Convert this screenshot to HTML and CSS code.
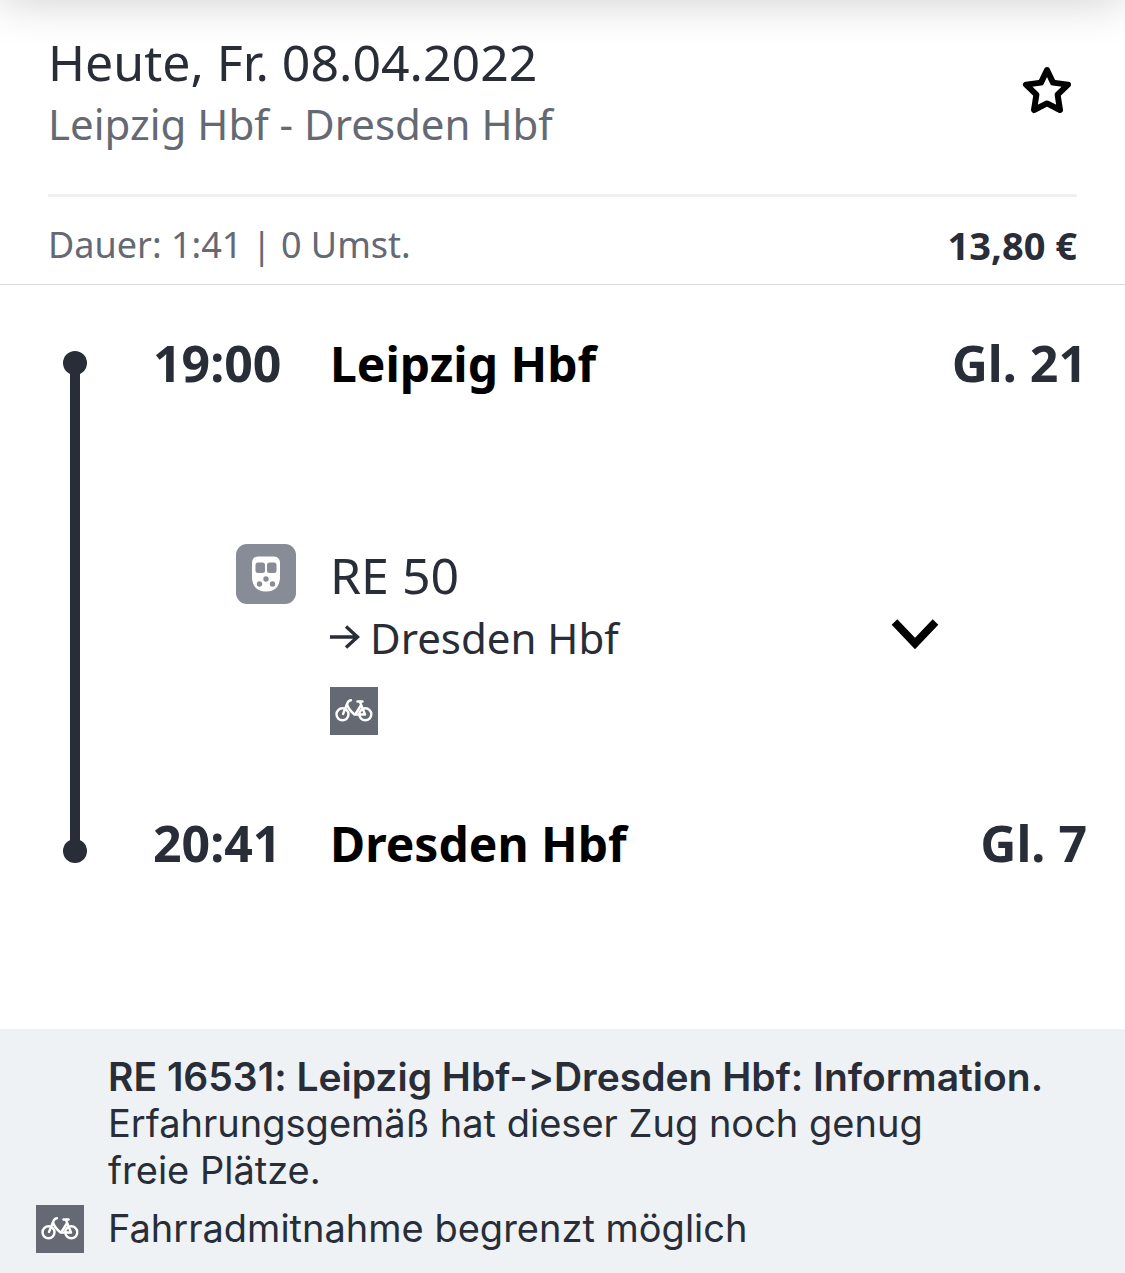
FILE: index.html
```html
<!DOCTYPE html>
<html lang="de">
  <head>
    <meta charset="UTF-8" />
    <meta name="viewport" content="width=device-width, initial-scale=1.0" />
    <title>Leipzig Hbf - Dresden Hbf</title>
    <link rel="stylesheet" href="styles.css">
  </head>

  <body>
    <!-- shared bike symbol, used in the leg and in the notes -->
    <svg class="symbols" width="0" height="0" aria-hidden="true">
      <symbol id="bike" viewBox="0 0 48 48">
        <g fill="none" stroke="#fff" stroke-width="2.4" stroke-linecap="round" stroke-linejoin="round">
          <circle cx="12.5" cy="27.3" r="6" />
          <circle cx="35.3" cy="27.3" r="6" />
          <path d="M13 27 L17.5 16 Q18.6 13.2 21 13.2" />
          <path d="M17 17.5 Q19 23 24.5 27.500 H35 L30 15" />
          <path d="M25.500 27 L30.500 19" />
          <path d="M27.500 14.500 H32.500" />
        </g>
      </symbol>
    </svg>

    <header class="header">
      <div class="headline">
        <div>
          <h1 class="date">Heute, Fr. 08.04.2022</h1>
          <p class="route">Leipzig Hbf - Dresden Hbf</p>
        </div>
        <button class="icon-btn" type="button" aria-label="Merken">
          <svg width="60" height="60" viewBox="0 0 60 60">
            <path d="M30 8 L36 20.600 L51 22.600 L40.600 32.600 L43 48 L30 41.400 L17 48 L19.400 32.600 L9 22.600 L24 20.600 Z" fill="none" stroke="#000" stroke-width="6" stroke-linejoin="round" />
          </svg>
        </button>
      </div>
      <div class="summary">
        <span>Dauer: 1:41 | 0 Umst.</span>
        <strong class="price">13,80 €</strong>
      </div>
    </header>

    <main class="journey">
      <div class="timeline">
        <span class="dot"></span>
        <span class="line"></span>
        <span class="dot"></span>
      </div>

      <div class="stops">
        <div class="stop">
          <time class="time">19:00</time>
          <h2 class="station">Leipzig Hbf</h2>
          <span class="platform">Gl. 21</span>
        </div>

        <div class="leg">
          <div class="train">
            <svg width="60" height="60" viewBox="0 0 60 60" aria-hidden="true">
              <rect width="60" height="60" rx="11" fill="#878c96" />
              <path d="M22 12.5 H38 Q44 13 44 19 V34 Q43 47.500 30 47.500 Q17 47.500 16 34 V19 Q16 13 22 12.500 Z" fill="#fff" />
              <g fill="#878c96">
                <rect x="19.500" y="18.500" width="9.500" height="10.500" rx="2.500" />
                <rect x="31" y="18.500" width="9.500" height="10.500" rx="2.500" />
                <circle cx="30" cy="35" r="2.700" />
                <circle cx="23.500" cy="40" r="2.700" />
                <circle cx="36.500" cy="40" r="2.700" />
              </g>
            </svg>
          </div>
          <div class="leg-info">
            <p class="line-name">RE 50</p>
            <p class="direction">
              <svg width="30" height="26" viewBox="0 0 30 26" aria-hidden="true">
                <path d="M0 12 H28 M16 1.500 L27.500 12 L16 22.500" fill="none" stroke="#282d37" stroke-width="3.400" />
              </svg>
              Dresden Hbf
            </p>
            <svg class="bike" width="48" height="48"><use href="#bike" /></svg>
          </div>
          <button class="icon-btn expand" type="button" aria-label="Zwischenhalte anzeigen">
            <svg width="60" height="60" viewBox="0 0 60 60">
              <path d="M9.500 18 L30 39.500 L50.500 18" fill="none" stroke="#000" stroke-width="7.800" />
            </svg>
          </button>
        </div>

        <div class="stop">
          <time class="time">20:41</time>
          <h2 class="station">Dresden Hbf</h2>
          <span class="platform">Gl. 7</span>
        </div>
      </div>
    </main>

    <section class="notes">
      <div class="note">
        <strong>RE 16531: Leipzig Hbf-&gt;Dresden Hbf: Information.</strong>
        <p>Erfahrungsgemäß hat dieser Zug noch genug<br>freie Plätze.</p>
      </div>
      <div class="note note-bike">
        <svg class="bike" width="48" height="48"><use href="#bike" /></svg>
        <p>Fahrradmitnahme begrenzt möglich</p>
      </div>
    </section>
  </body>
</html>
```

FILE: styles.css
```css
* {
  box-sizing: border-box;
}

body {
  display: flex;
  flex-direction: column;
  min-height: 100vh;
  margin: 0;
  background: #fff;
  color: #282d37;
  font-family: "Noto Sans", "Open Sans", sans-serif;
}

h1,
h2,
p {
  margin: 0;
  font-weight: normal;
}

svg {
  display: block;
}

.symbols {
  position: absolute;
}

.icon-btn {
  padding: 0;
  border: none;
  background: none;
  cursor: pointer;
}

/* Header */
.header {
  position: relative;
  overflow: hidden;
  padding: 30px 48px 0;
  border-bottom: 1px solid #d7dadd;
}

/* shadow of the bar above */
.header::before {
  content: "";
  position: absolute;
  top: -60px;
  left: 0;
  right: 0;
  height: 60px;
  box-shadow: 0 0 48px rgba(0, 0, 0, 0.2);
}

.headline {
  display: flex;
  justify-content: space-between;
  align-items: center;
  padding-bottom: 40px;
  border-bottom: 3px solid #f0f0f0;
}

.date {
  font-size: 50px;
  line-height: 64px;
}

.route {
  color: #646973;
  font-size: 42px;
  line-height: 60px;
}

.summary {
  display: flex;
  justify-content: space-between;
  align-items: center;
  height: 87px;
  padding-top: 8px;
  color: #646973;
  font-size: 36px;
}

.price {
  color: #282d37;
  font-size: 38px;
}

/* Journey */
.journey {
  display: flex;
  padding: 48px 38px 156px 63px;
}

.timeline {
  display: flex;
  flex-direction: column;
  align-items: center;
  width: 90px;
  padding: 18px 66px 10px 0;
}

.dot {
  width: 24px;
  height: 24px;
  border-radius: 50%;
  background: #282d37;
}

.line {
  flex: 1;
  width: 10px;
  margin: -2px 0;
  background: #282d37;
}

.stops {
  flex: 1;
}

.stop {
  display: flex;
  align-items: center;
  height: 60px;
  font-size: 50px;
  font-weight: bold;
}

.time,
.train {
  width: 177px;
}

.station {
  flex: 1;
  color: #000;
  font-size: 48px;
  font-weight: bold;
}

.leg {
  display: flex;
  align-items: flex-start;
  height: 420px;
  padding-top: 151px;
}

.train {
  display: flex;
  justify-content: flex-end;
  padding-right: 34px;
}

.leg-info {
  flex: 1;
}

.line-name {
  font-size: 50px;
  line-height: 62px;
}

.direction {
  display: flex;
  align-items: center;
  gap: 10px;
  font-size: 42px;
  line-height: 64px;
}

.bike {
  background: #646973;
}

.leg-info .bike {
  margin-top: 17px;
}

.expand {
  margin: 60px 142px 0 0;
}

/* Notes */
.notes {
  flex: 1;
  padding: 24px 36px 20px;
  background: #eef2f5;
  font-family: Inter, "Liberation Sans", sans-serif;
  font-size: 38px;
  font-feature-settings: "calt" 0;
  line-height: 47px;
}

.note {
  padding-left: 72px;
}

.note strong {
  display: block;
  font-size: 39px;
  font-weight: 600;
}

.note-bike {
  display: flex;
  gap: 24px;
  margin-top: 11px;
  padding-left: 0;
}
```
